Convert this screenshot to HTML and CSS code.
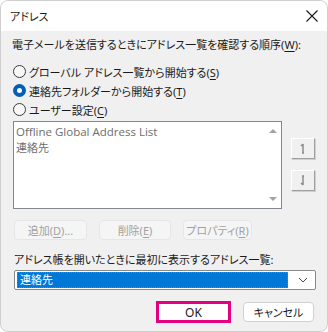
FILE: index.html
```html
<!DOCTYPE html>
<html lang="ja">
  <head>
    <meta charset="UTF-8" />
    <meta name="viewport" content="width=device-width, initial-scale=1.0" />
    <title>アドレス</title>
    <link rel="stylesheet" href="styles.css">
  </head>

  <body>
    <section class="vindue">
      <header class="titel">
        <span>アドレス</span>
        <svg class="luk" width="12" height="12" viewBox="0 0 12 12">
          <path d="M0.5 0.5 L11.5 11.5 M11.5 0.5 L0.5 11.5" stroke="#1a1a1a" stroke-width="1.1" fill="none" />
        </svg>
      </header>

      <div class="indhold">
        <p class="overskrift">電子メールを送信するときにアドレス一覧を確認する順序(<u>W</u>):</p>

        <div class="valg">
          <label class="radio"><span class="prik"></span><span>グローバル アドレス一覧から開始する(<u>S</u>)</span></label>
          <label class="radio"><span class="prik valgt"></span><span>連絡先フォルダーから開始する(<u>T</u>)</span></label>
          <label class="radio"><span class="prik"></span><span>ユーザー設定(<u>C</u>)</span></label>
        </div>

        <div class="liste-raekke">
          <div class="liste">
            <div class="punkter">
              <div class="latin">Offline Global Address List</div>
              <div>連絡先</div>
            </div>
            <div class="rulle">
              <span class="pil op"></span>
              <span class="pil ned"></span>
            </div>
          </div>
          <div class="flyt">
            <button class="flyt-knap">
              <svg width="8" height="11" viewBox="0 0 8 11"><path d="M4 1 V10 M2 3 L4 1 M3 10 H5" stroke="#8c8c8c" stroke-width="1.5" fill="none" /></svg>
            </button>
            <button class="flyt-knap">
              <svg width="8" height="11" viewBox="0 0 8 11"><path d="M4 1 V10 M2 8 L4 10 M3 1 H5" stroke="#8c8c8c" stroke-width="1.5" fill="none" /></svg>
            </button>
          </div>
        </div>

        <div class="knapper">
          <button class="slukket tilfoej">追加(<u>D</u>)...</button>
          <button class="slukket slet">削除(<u>E</u>)</button>
          <button class="slukket egenskab">プロパティ(<u>R</u>)</button>
        </div>

        <p class="overskrift bog">アドレス帳を開いたときに最初に表示するアドレス一覧:</p>

        <div class="combo">
          <div class="combo-valg">連絡先</div>
          <svg class="chevron" width="10" height="6" viewBox="0 0 10 6"><path d="M1 1 L5 5 L9 1" stroke="#444" stroke-width="1" fill="none" /></svg>
        </div>

        <footer class="bund">
          <div class="ok-ramme"><button class="knap">OK</button></div>
          <button class="knap annuller">キャンセル</button>
        </footer>
      </div>
    </section>
  </body>
</html>
```

FILE: styles.css
```css
* {
  box-sizing: border-box;
}

body {
  margin: 0;
  background-color: white;
  font-family: "Noto Sans", "Noto Sans CJK JP", sans-serif;
  font-size: 11px;
  font-feature-settings: "palt";
  color: #1a1a1a;
  white-space: nowrap;
}

p {
  margin: 0;
}

u {
  text-underline-offset: 2px;
}

.vindue {
  width: 328px;
  height: 332px;
  border: 1px solid #cfcfcf;
  border-radius: 8px;
  background-color: #f0f0f0;
  overflow: hidden;
}

.titel {
  height: 30px;
  background-color: white;
  display: flex;
  align-items: center;
  justify-content: space-between;
  padding: 0 9px 0 9px;
}

.indhold {
  padding: 0 11px 0 11px;
}

.overskrift {
  margin-top: 7px;
  height: 14px;
  line-height: 14px;
}

.valg {
  margin-top: 10px;
  display: flex;
  flex-direction: column;
}

.radio {
  height: 19px;
  display: flex;
  align-items: center;
  gap: 3px;
}

.prik {
  width: 13px;
  height: 13px;
  border: 1px solid #3b3b3b;
  border-radius: 50%;
  margin-left: 1px;
  background-color: #f7f7f7;
}

.prik.valgt {
  border: 4px solid #005fb8;
  background-color: white;
}

.liste-raekke {
  margin-top: 2px;
  display: flex;
  gap: 9px;
}

.liste {
  margin-left: 1px;
  width: 269px;
  height: 88px;
  border: 1px solid #828790;
  background-color: white;
  display: flex;
  color: #6d6d6d;
}

.punkter {
  flex: 1;
  padding: 2px 0 0 2px;
  line-height: 16px;
}

.latin {
  font-family: "Open Sans", "Noto Sans", sans-serif;
  font-size: 11.5px;
}

.rulle {
  width: 17px;
  display: flex;
  flex-direction: column;
  justify-content: space-between;
  align-items: center;
  padding: 7px 0 7px 0;
}

.pil {
  width: 0;
  height: 0;
  border-left: 4px solid transparent;
  border-right: 4px solid transparent;
}

.pil.op {
  border-bottom: 4px solid #a3a3a3;
}

.pil.ned {
  border-top: 4px solid #a3a3a3;
}

.flyt {
  padding-top: 17px;
  display: flex;
  flex-direction: column;
  gap: 11px;
}

.flyt-knap {
  width: 24px;
  height: 21px;
  padding: 0;
  background-color: #f0f0f0;
  border: 1px solid;
  border-color: white #a0a0a0 #a0a0a0 white;
  box-shadow: 1px 1px 0 #cfcfcf;
  display: flex;
  align-items: center;
  justify-content: center;
}

.knapper {
  margin-top: 11px;
  margin-left: 2px;
  display: flex;
  gap: 12px;
}

.slukket {
  height: 20px;
  padding: 0;
  font-family: inherit;
  font-size: 11px;
  font-feature-settings: "palt";
  color: #a2a2a2;
  background-color: #f5f5f5;
  border: 1px solid #e6e6e6;
  border-radius: 4px;
  white-space: nowrap;
}

.tilfoej {
  width: 73px;
}

.slet {
  width: 72px;
}

.egenskab {
  width: 69px;
}

.overskrift.bog {
  margin-top: 13px;
  margin-left: 2px;
}

.combo {
  margin-top: 3px;
  margin-left: 2px;
  height: 20px;
  border: 1px solid #8a8a8a;
  border-radius: 2px;
  background-color: white;
  display: flex;
  align-items: center;
  padding: 0 7px 0 2px;
}

.combo-valg {
  flex: 1;
  height: 16px;
  margin-right: 10px;
  line-height: 14px;
  padding-left: 2px;
  color: white;
  background-color: #0078d7;
  border: 1px dotted #c07000;
}

.bund {
  margin-top: 11px;
  display: flex;
  justify-content: flex-end;
  align-items: center;
  gap: 12px;
  padding-right: 2px;
}

.ok-ramme {
  border: 3px solid #e4007f;
  height: 22px;
  width: 75px;
  display: flex;
}

.knap {
  height: 20px;
  width: 71px;
  padding: 0;
  font-family: inherit;
  font-size: 11px;
  font-feature-settings: "palt";
  color: #1a1a1a;
  background-color: white;
  border: 1px solid #d0d0d0;
  border-radius: 4px;
}

.ok-ramme .knap {
  flex: 1;
  height: 16px;
  border: none;
  border-radius: 0;
  font-size: 12px;
}
```
